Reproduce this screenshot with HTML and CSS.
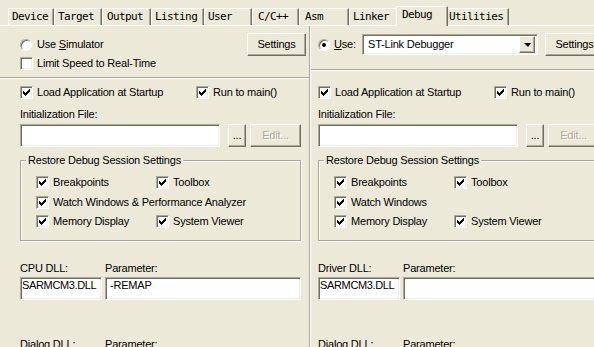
FILE: index.html
```html
<!DOCTYPE html>
<html lang="en">
<head>
  <meta charset="UTF-8">
  <title>Options for Target - Debug</title>
  <link rel="stylesheet" href="styles.css">
</head>
<body>
  <!-- check mark used by every checkbox -->
  <svg class="defs" width="0" height="0">
    <symbol id="tick" viewBox="0 0 7 7">
      <path d="M6 0h1v1h-1zM5 1h2v1h-2zM0 2h1v1h-1zM4 2h3v1h-3zM0 3h2v1h-2zM3 3h3v1h-3zM0 4h5v1h-5zM1 5h3v1h-3zM2 6h1v1h-1z"/>
    </symbol>
  </svg>

  <div class="tabstrip">
    <div class="tab">Device</div>
    <div class="tab">Target</div>
    <div class="tab">Output</div>
    <div class="tab">Listing</div>
    <div class="tab">User</div>
    <div class="tab">C/C++</div>
    <div class="tab">Asm</div>
    <div class="tab">Linker</div>
    <div class="tab active">Debug</div>
    <div class="tab">Utilities</div>
  </div>

  <div class="panel">
    <!-- Left: simulator -->
    <div class="pane pane-left">
      <div class="row-top">
        <label class="opt"><span class="radio"></span><span>Use <u>S</u>imulator</span></label>
        <button class="btn settings">Settings</button>
      </div>
      <div class="row-check limit"><span class="chk"></span>Limit Speed to Real-Time</div>
      <div class="sep"></div>
      <div class="pair">
        <div class="row-check"><span class="chk"><svg width="7" height="7"><use href="#tick"/></svg></span>Load Application at Startup</div>
        <div class="row-check"><span class="chk"><svg width="7" height="7"><use href="#tick"/></svg></span>Run to main()</div>
      </div>
      <div class="caption">Initialization File:</div>
      <div class="file-row">
        <div class="field init"></div>
        <button class="btn dots">...</button>
        <button class="btn edit" disabled>Edit...</button>
      </div>
      <fieldset class="restore">
        <legend>Restore Debug Session Settings</legend>
        <div class="opts">
          <div class="row-check"><span class="chk"><svg width="7" height="7"><use href="#tick"/></svg></span>Breakpoints</div>
          <div class="row-check"><span class="chk"><svg width="7" height="7"><use href="#tick"/></svg></span>Toolbox</div>
          <div class="row-check wide"><span class="chk"><svg width="7" height="7"><use href="#tick"/></svg></span>Watch Windows &amp; Performance Analyzer</div>
          <div class="row-check"><span class="chk"><svg width="7" height="7"><use href="#tick"/></svg></span>Memory Display</div>
          <div class="row-check"><span class="chk"><svg width="7" height="7"><use href="#tick"/></svg></span>System Viewer</div>
        </div>
      </fieldset>
      <div class="dll dll-labels"><span>CPU DLL:</span><span>Parameter:</span></div>
      <div class="dll dll-fields"><div class="field dllname">SARMCM3.DLL</div><div class="field param">-REMAP</div></div>
      <div class="dll dll-labels dialog"><span>Dialog DLL:</span><span>Parameter:</span></div>
    </div>

    <div class="divider"></div>

    <!-- Right: target driver -->
    <div class="pane pane-right">
      <div class="row-top">
        <label class="opt use"><span class="radio on"></span><span><u>U</u>se:</span></label>
        <div class="field select">
          <span class="select-text">ST-Link Debugger</span>
          <span class="arrow"></span>
        </div>
        <button class="btn settings">Settings</button>
      </div>
      <div class="sep"></div>
      <div class="pair">
        <div class="row-check"><span class="chk"><svg width="7" height="7"><use href="#tick"/></svg></span>Load Application at Startup</div>
        <div class="row-check"><span class="chk"><svg width="7" height="7"><use href="#tick"/></svg></span>Run to main()</div>
      </div>
      <div class="caption">Initialization File:</div>
      <div class="file-row">
        <div class="field init"></div>
        <button class="btn dots">...</button>
        <button class="btn edit" disabled>Edit...</button>
      </div>
      <fieldset class="restore">
        <legend>Restore Debug Session Settings</legend>
        <div class="opts">
          <div class="row-check"><span class="chk"><svg width="7" height="7"><use href="#tick"/></svg></span>Breakpoints</div>
          <div class="row-check"><span class="chk"><svg width="7" height="7"><use href="#tick"/></svg></span>Toolbox</div>
          <div class="row-check wide"><span class="chk"><svg width="7" height="7"><use href="#tick"/></svg></span>Watch Windows</div>
          <div class="row-check"><span class="chk"><svg width="7" height="7"><use href="#tick"/></svg></span>Memory Display</div>
          <div class="row-check"><span class="chk"><svg width="7" height="7"><use href="#tick"/></svg></span>System Viewer</div>
        </div>
      </fieldset>
      <div class="dll dll-labels"><span>Driver DLL:</span><span>Parameter:</span></div>
      <div class="dll dll-fields"><div class="field dllname">SARMCM3.DLL</div><div class="field param"></div></div>
      <div class="dll dll-labels dialog"><span>Dialog DLL:</span><span>Parameter:</span></div>
    </div>
  </div>
</body>
</html>
```

FILE: styles.css
```css
body {
  margin: 0;
  width: 594px;
  height: 347px;
  overflow: hidden;
  background: #ece9d8;
  color: #000;
  font: 11px/13px "Liberation Sans", Arial, sans-serif;
  letter-spacing: -0.2px;
}

.defs {
  position: absolute;
  width: 0;
  height: 0;
}

/* Tabs */
.tabstrip {
  display: flex;
  align-items: flex-end;
  height: 25px;
  padding-left: 8px;
}

.tab {
  box-sizing: border-box;
  flex: none;
  height: 17px;
  padding: 1px 0 0 3px;
  border: 1px solid #fff;
  border-bottom: 0;
  border-right-color: #716f64;
  box-shadow: inset -1px 0 #aca899;
  font: 11px/13px "DejaVu Sans Mono", monospace;
  letter-spacing: -0.6px;
  white-space: nowrap;
}

.tab:nth-child(1) { width: 46px; }
.tab:nth-child(2) { width: 48px; }
.tab:nth-child(3) { width: 49px; padding-left: 4px; }
.tab:nth-child(4) { width: 53px; }
.tab:nth-child(5) { width: 48px; }
.tab:nth-child(6) { width: 47px; padding-left: 5px; }
.tab:nth-child(7) { width: 50px; padding-left: 5px; }
.tab:nth-child(8) { width: 49px; }
.tab:nth-child(10) { width: 63px; padding-left: 2px; }

.tab.active {
  position: relative;
  z-index: 1;
  width: 52px;
  height: 20px;
  margin: 0 -2px -1px;
  padding-left: 5px;
  background: #ece9d8;
}

/* Panel */
.panel {
  display: flex;
  height: 321px;
  border-top: 1px solid #fff;
}

.pane {
  box-sizing: border-box;
  flex: none;
  display: flex;
  flex-direction: column;
}

.pane-left {
  width: 309px;
  padding: 0 8px 0 20px;
}

.pane-right {
  width: 288px;
  padding-left: 7px;
}

.divider {
  flex: none;
  width: 0;
  border-left: 1px solid #aca899;
  border-right: 1px solid #fff;
}

.sep {
  height: 0;
  border-top: 1px solid #aca899;
  border-bottom: 1px solid #fff;
}

.pane-left .sep {
  margin: 7px -8px 0 -20px;
}

.pane-right .sep {
  margin: 13px 0 0 -7px;
}

.row-top {
  display: flex;
  align-items: center;
  height: 23px;
  margin-top: 7px;
}

.opt {
  display: flex;
  align-items: center;
  gap: 5px;
}

.opt.use {
  width: 44px;
  gap: 4px;
}

.row-check {
  display: flex;
  align-items: center;
  gap: 4px;
  height: 13px;
  white-space: nowrap;
}

.limit {
  margin-top: 1px;
}

.pair {
  display: grid;
  grid-template-columns: 176px auto;
  margin-top: 7px;
}

.pane-right .pair {
  margin-top: 15px;
}

.caption {
  margin-top: 9px;
}

/* Controls */
.chk {
  box-sizing: border-box;
  flex: none;
  display: flex;
  align-items: center;
  justify-content: center;
  width: 13px;
  height: 13px;
  border: 1px solid;
  border-color: #aca899 #fff #fff #aca899;
  box-shadow: inset 1px 1px #716f64, inset -1px -1px #f1efe2;
  background: #fff;
}

.chk svg {
  display: block;
}

.radio {
  box-sizing: border-box;
  flex: none;
  display: flex;
  align-items: center;
  justify-content: center;
  width: 12px;
  height: 12px;
  border: 1px solid;
  border-color: #aca899 #fff #fff #aca899;
  border-radius: 50%;
  box-shadow: inset 1px 1px #716f64;
  background: #fff;
}

.radio.on::after {
  content: "";
  width: 4px;
  height: 4px;
  border-radius: 50%;
  background: #000;
}

.btn {
  box-sizing: border-box;
  flex: none;
  height: 23px;
  padding: 0;
  border: 1px solid;
  border-color: #fff #716f64 #716f64 #fff;
  box-shadow: inset -1px -1px #aca899;
  background: #ece9d8;
  color: #000;
  font: inherit;
  letter-spacing: inherit;
}

.settings {
  width: 59px;
  margin: 0 -5px 0 auto;
}

.dots {
  width: 18px;
  margin-left: 8px;
}

.edit {
  width: 51px;
  margin-left: 4px;
  color: #aca899;
  text-shadow: 1px 1px #fff;
}

.field {
  box-sizing: border-box;
  height: 23px;
  padding: 1px 2px 0;
  border: 1px solid;
  border-color: #aca899 #fff #fff #aca899;
  box-shadow: inset 1px 1px #716f64, inset -1px -1px #f1efe2;
  background: #fff;
  white-space: nowrap;
  overflow: hidden;
}

.file-row {
  display: flex;
  margin-top: 3px;
}

.init {
  width: 200px;
}

.select {
  display: flex;
  align-items: center;
  justify-content: space-between;
  width: 176px;
  height: 21px;
  padding: 0 2px 0 5px;
}

.arrow {
  box-sizing: border-box;
  display: flex;
  align-items: center;
  justify-content: center;
  width: 16px;
  height: 17px;
  border: 1px solid;
  border-color: #fff #716f64 #716f64 #fff;
  box-shadow: inset -1px -1px #aca899;
  background: #ece9d8;
}

.arrow::after {
  content: "";
  border-top: 4px solid #000;
  border-left: 4px solid transparent;
  border-right: 3px solid transparent;
}

/* Restore group */
.restore {
  margin: 7px 0 0;
  padding: 9px 0 12px;
  border: 1px solid #aca899;
  box-shadow: inset 1px 1px #fff, 1px 1px #fff;
}

.restore legend {
  margin-left: 5px;
  padding: 0 2px;
  background: #ece9d8;
}

.opts {
  display: grid;
  grid-template-columns: 120px auto;
  grid-auto-rows: 13px;
  row-gap: 6.5px;
  padding-left: 15px;
}

.opts .wide {
  grid-column: 1 / -1;
}

/* DLL rows */
.dll {
  display: grid;
  grid-template-columns: 82px 196px;
  column-gap: 3px;
}

.dll-labels {
  margin-top: 21px;
}

.dll-fields {
  margin-top: 2px;
}

.dll-labels.dialog {
  margin-top: 38px;
}

.dllname {
  padding-left: 1px;
  padding-right: 0;
  letter-spacing: -0.35px;
}

.param {
  padding-left: 4px;
}
```
